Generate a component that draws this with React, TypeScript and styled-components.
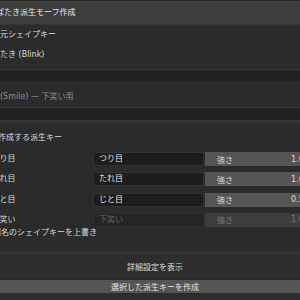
import * as React from 'react'
import styled, {createGlobalStyle} from 'styled-components'

const GlobalStyle = createGlobalStyle`
  html, body {
    margin: 0;
    padding: 0;
    overflow: hidden;
    background: #2b2b2b;
  }
  body {
    font-family: "DejaVu Sans", "Noto Sans CJK JP", sans-serif;
    font-size: 8px;
    color: #dcdcdc;
  }
`

const Panel = styled.div`
  width: 350px;
  margin-left: -20px;
  display: flex;
  flex-direction: column;
`

const Header = styled.div`
  height: 23px;
  border-top: 1px solid #262626;
  border-bottom: 1px solid #353535;
  background: #3d3d3d;
  display: flex;
  align-items: center;
  padding: 0 0 3px 8px;
  box-sizing: content-box;
  color: #e6e6e6;
  height: 20px;
`

const Section = styled.div<{$top?: number; $bottom?: number; $left?: number}>`
  display: flex;
  flex-direction: column;
  padding: ${p => p.$top || 0}px 0 ${p => p.$bottom || 0}px ${p => p.$left || 0}px;
`

const Line = styled.div<{$dim?: boolean; $h?: number}>`
  height: ${p => p.$h || 20}px;
  line-height: ${p => p.$h || 20}px;
  white-space: nowrap;
  color: ${p => (p.$dim ? '#8e8e8e' : '#dcdcdc')};
`

const DarkBand = styled.div<{$bottom?: number}>`
  height: 12px;
  background: #222222;
  border-top: 1px solid #393939;
  border-bottom: ${p => p.$bottom || 1}px solid #353535;
`

const Rows = styled.div`
  display: flex;
  flex-direction: column;
  gap: 6.3px;
  margin-top: 4px;
`

const Row = styled.div`
  display: grid;
  grid-template-columns: 112px 111px 114px;
  column-gap: 1px;
  height: 14px;
  align-items: stretch;
`

const RowLabel = styled.div`
  padding-left: 11.5px;
  line-height: 14px;
  white-space: nowrap;
  color: #d8d8d8;
`

const Field = styled.div<{$off?: boolean}>`
  background: ${p => (p.$off ? '#252525' : '#1d1d1d')};
  border: 1px solid ${p => (p.$off ? '#2e2e2e' : '#333333')};
  border-radius: 3px 0 0 3px;
  padding-left: 5px;
  line-height: 12px;
  color: ${p => (p.$off ? '#666666' : '#e2e2e2')};
  white-space: nowrap;
`

const Slider = styled.div<{$off?: boolean}>`
  background: ${p => (p.$off ? '#3e3e3e' : '#555555')};
  display: flex;
  justify-content: space-between;
  align-items: center;
  padding: 0 5px 0 12px;
  color: ${p => (p.$off ? '#787878' : '#dadada')};
  white-space: nowrap;
`

const CheckLine = styled.div`
  height: 12px;
  line-height: 12px;
  padding-left: 13px;
  white-space: nowrap;
  color: #d8d8d8;
`

const Toggle = styled.div`
  margin-top: 12.6px;
  border-top: 3px solid #333333;
  height: 25px;
  background: #2d2d2d;
  display: flex;
  align-items: center;
  justify-content: center;
  color: #dcdcdc;
`

const Button = styled.div`
  border-top: 1px solid #262626;
  height: 13px;
  background: #555555;
  display: flex;
  align-items: center;
  justify-content: center;
  color: #e8e8e8;
`

const Footer = styled.div`
  height: 8px;
  background: #2d2d2d;
`

const keys = [
  {name: 'つり目', target: 'つり目', value: '1.000'},
  {name: 'たれ目', target: 'たれ目', value: '1.000'},
  {name: 'じと目', target: 'じと目', value: '0.500'},
  {name: '下笑い', target: '下笑い', value: '1.000', off: true},
]

const App = () => {
  return (
    <>
      <GlobalStyle />
      <Panel>
        <Header>まばたき派生モーフ作成</Header>
        <Section $left={4} $bottom={4}>
          <Line>派生元シェイプキー</Line>
          <Line>まばたき (Blink)</Line>
        </Section>
        <DarkBand />
        <Section $left={20} $top={4}>
          <Line $dim>(Smile) — 下笑い用</Line>
        </Section>
        <DarkBand $bottom={3} />
        <Section $left={18} $top={5}>
          <Line>作成する派生キー</Line>
        </Section>
        <Rows>
          {keys.map(k => (
            <Row key={k.name}>
              <RowLabel>{k.name}</RowLabel>
              <Field $off={k.off}>{k.target}</Field>
              <Slider $off={k.off}>
                <span>強さ</span>
                <span>{k.value}</span>
              </Slider>
            </Row>
          ))}
        </Rows>
        <CheckLine>同名のシェイプキーを上書き</CheckLine>
        <Toggle>詳細設定を表示</Toggle>
        <Button>選択した派生キーを作成</Button>
        <Footer />
      </Panel>
    </>
  )
}

export default App
